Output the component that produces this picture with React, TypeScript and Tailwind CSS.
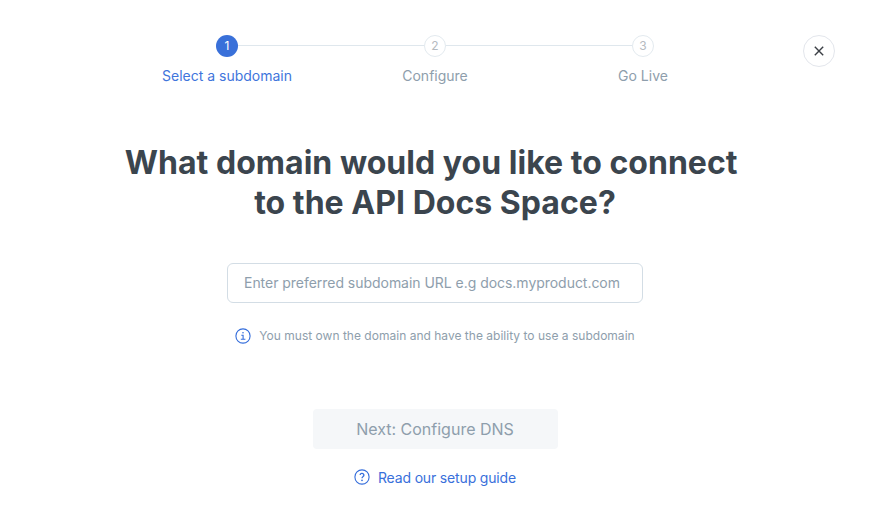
import React from "react";

const steps = [
  { n: 1, label: "Select a subdomain", active: true },
  { n: 2, label: "Configure", active: false },
  { n: 3, label: "Go Live", active: false },
];

function InfoIcon() {
  return (
    <svg width="16" height="16" viewBox="0 0 16 16" fill="none" stroke="#346ddb" strokeWidth="1.1" className="shrink-0">
      <circle cx="8" cy="8" r="7.1" />
      <path d="M6.3 7.2H8.1V11.2M5.8 11.2H10.4" />
      <circle cx="8" cy="4.8" r="0.8" fill="#346ddb" stroke="none" />
    </svg>
  );
}

function HelpIcon() {
  return (
    <svg width="16" height="16" viewBox="0 0 16 16" fill="none" stroke="#346ddb" strokeWidth="1.1" className="shrink-0">
      <circle cx="8" cy="8" r="7.1" />
      <path d="M6.1 6.1A1.9 1.8 0 1 1 8.9 7.7C8.2 8.1 8 8.5 8 9.3" strokeWidth="1.3" />
      <circle cx="8" cy="11.3" r="0.85" fill="#346ddb" stroke="none" />
    </svg>
  );
}

export default function App() {
  return (
    <div className="flex h-[525px] w-[870px] flex-col items-center bg-white font-[Inter,sans-serif]">
      <header className="flex w-full items-start justify-between pt-[35px] pr-[35px] pl-[123px]">
        <ol className="flex">
          {steps.map((s, i) => (
            <li key={s.n} className="flex w-[208px] flex-col items-center">
              <div className="flex w-full items-center">
                <span className={i === 0 ? "mb-px h-px flex-1" : "mb-px h-px flex-1 bg-[#dfe7ed]"} />
                <span
                  className={
                    s.active
                      ? "flex size-[22px] items-center justify-center rounded-full bg-[#3970d9] text-xs text-white"
                      : "flex size-[22px] items-center justify-center rounded-full border border-[#e3eaef] text-xs text-[#b5babf]"
                  }
                >
                  {s.n}
                </span>
                <span className={i === 2 ? "mb-px h-px flex-1" : "mb-px h-px flex-1 bg-[#dfe7ed]"} />
              </div>
              <span className={s.active ? "mt-[9px] text-sm text-[#3f75dc]" : "mt-[9px] text-sm text-[#8e9eac]"}>
                {s.label}
              </span>
            </li>
          ))}
        </ol>
        <button aria-label="Close" className="flex size-8 items-center justify-center rounded-full border border-[#e3e6ec]">
          <svg width="10" height="10" viewBox="0 0 10 10" stroke="#3b3f45" strokeWidth="1.4">
            <path d="M0.8 0.8L9.2 9.2M9.2 0.8L0.8 9.2" />
          </svg>
        </button>
      </header>
      <h1 className="mt-[57px] text-center text-[32px] leading-10 font-bold tracking-[0.03px] whitespace-pre text-[#3b454e]">
        {"What domain would you like to connect \nto the API Docs Space?"}
      </h1>
      <input
        className="mt-10 h-10 w-[416px] rounded-md border border-[#d3dde5] px-4 pb-0.5 text-sm tracking-[-0.035px] outline-none placeholder:text-[#8e9eac]"
        placeholder="Enter preferred subdomain URL e.g docs.myproduct.com"
      />
      <p className="mt-[25px] flex h-4 items-center gap-2 text-xs tracking-[0.015px] text-[#8e9eac]">
        <InfoIcon />
        You must own the domain and have the ability to use a subdomain
      </p>
      <button className="mt-[65px] h-10 w-[245px] rounded-[4px] bg-[#f5f7f9] text-base text-[#8e9eac]">
        Next: Configure DNS
      </button>
      <a className="mt-5 flex h-4 items-center gap-2 text-sm tracking-[-0.16px] text-[#3970db]">
        <HelpIcon />
        <span className="mt-0.5">Read our setup guide</span>
      </a>
    </div>
  );
}
